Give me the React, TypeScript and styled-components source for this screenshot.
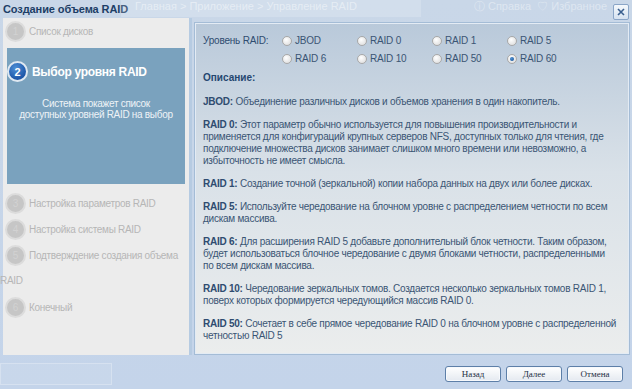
import React from 'react';
import styled, { createGlobalStyle } from 'styled-components';

const GlobalStyle = createGlobalStyle`
  html, body { margin: 0; padding: 0; }
  body { width: 632px; height: 389px; overflow: hidden; background: #c6d6ea; }
`;

const Window = styled.div`
  width: 632px;
  height: 389px;
  display: flex;
  flex-direction: column;
  background: linear-gradient(#c9d7e8, #c4d4ea);
  font-family: 'Liberation Sans', Arial, sans-serif;
  position: relative;
  overflow: hidden;
`;

const TitleBar = styled.div`
  height: 18px;
  display: flex;
  align-items: center;
  padding-left: 3px;
  flex-shrink: 0;
`;

const Title = styled.div`
  font-size: 11px;
  font-weight: bold;
  color: #1d3e66;
  letter-spacing: -0.1px;
  white-space: nowrap;
  width: 118px;
  flex-shrink: 0;
`;

const GhostTab = styled.div`
  height: 18px;
  width: 300px;
  margin-top: -3px;
  background: rgba(255, 255, 255, 0.18);
  color: rgba(255, 255, 255, 0.45);
  font-size: 11px;
  line-height: 14px;
  padding-left: 14px;
  box-sizing: border-box;
  white-space: nowrap;
  overflow: hidden;
`;

const GhostLinks = styled.div`
  margin-left: auto;
  color: rgba(255, 255, 255, 0.4);
  font-size: 11px;
  margin-top: -6px;
  margin-right: 6px;
  white-space: nowrap;
`;

const Close = styled.div`
  width: 14px;
  height: 14px;
  margin-right: 3px;
  margin-top: 5px;
  border: 1px solid #8aa5c7;
  border-radius: 2px;
  background: linear-gradient(#f4f8fc, #d6e2f0);
  display: flex;
  align-items: center;
  justify-content: center;
`;

const Body = styled.div`
  display: flex;
  height: 337px;
  padding-left: 3px;
  flex-shrink: 0;
`;

const Steps = styled.div`
  width: 186px;
  background: #ececec;
  border-right: 3px solid #b6cbe2;
`;

const StepRow = styled.div`
  display: flex;
  align-items: center;
  height: 26px;
  color: #b6b6b6;
  font-size: 10px;
  letter-spacing: -0.3px;
  white-space: nowrap;
  padding-left: 2px;
`;

const Wrapped = styled.div`
  color: #b6b6b6;
  font-size: 10px;
  letter-spacing: -0.3px;
  height: 26px;
  line-height: 26px;
  margin-left: -3px;
`;

const Num = styled.div<{ $active?: boolean }>`
  width: 17px;
  height: 17px;
  border-radius: 50%;
  flex-shrink: 0;
  display: flex;
  align-items: center;
  justify-content: center;
  margin-right: ${(p) => (p.$active ? '4px' : '3px')};
  font-size: ${(p) => (p.$active ? '11px' : '10px')};
  letter-spacing: 0;
  color: ${(p) => (p.$active ? '#fff' : '#d2d2d2')};
  background: ${(p) =>
    p.$active
      ? 'radial-gradient(circle at 40% 30%, #4e8fd6, #1d56a8 70%)'
      : '#c6c6c6'};
  border: 2px solid ${(p) => (p.$active ? '#dfe8f1' : '#dcdcdc')};
  font-weight: ${(p) => (p.$active ? 'bold' : 'normal')};
`;

const ActiveStep = styled.div`
  margin: 4px 4px 6px 4px;
  height: 136px;
  background: #7aa2be;
  color: #fff;
  padding-top: 13px;
  box-sizing: border-box;
`;

const ActiveHead = styled.div`
  display: flex;
  align-items: center;
  font-size: 12px;
  font-weight: bold;
  letter-spacing: -0.3px;
  white-space: nowrap;
`;

const ActiveDesc = styled.div`
  text-align: center;
  font-size: 10px;
  line-height: 11px;
  letter-spacing: -0.3px;
  margin-top: 16px;
  color: #eef3f7;
`;

const Panel = styled.div`
  flex: 1;
  margin: 4px 2px 0 2px;
  border: 1px solid #a4bcd6;
  box-shadow: inset 0 0 0 1px #e3ebf4;
  background: linear-gradient(#b9c9da 0%, #d9e1e8 45%, #ebeded 100%);
  padding: 12px 8px 0 8px;
  color: #2f4c70;
  font-size: 10px;
`;

const LevelGrid = styled.div`
  display: grid;
  grid-template-columns: 79px 75px 75px 75px 75px;
  row-gap: 7px;
  align-items: center;
  letter-spacing: -0.2px;
`;

const Label = styled.div`
  color: #2f4c70;
`;

const Option = styled.label`
  display: flex;
  align-items: center;
  gap: 3px;
  color: #3a5574;
  height: 11px;
`;

const Radio = styled.span<{ $checked?: boolean }>`
  width: 8px;
  height: 8px;
  border-radius: 50%;
  border: 1px solid #a8a8a8;
  background: radial-gradient(circle at 40% 35%, #ffffff, #d8d8d8);
  display: inline-flex;
  align-items: center;
  justify-content: center;
  &::after {
    content: '';
    display: ${(p) => (p.$checked ? 'block' : 'none')};
    width: 4px;
    height: 4px;
    border-radius: 50%;
    background: radial-gradient(circle at 40% 35%, #4d8fd2, #104c92);
  }
`;

const Heading = styled.div`
  font-weight: bold;
  color: #254770;
  margin-top: 8px;
  margin-bottom: 13px;
`;

const Para = styled.p`
  margin: 0 0 11px 0;
  line-height: 12px;
  letter-spacing: -0.25px;
  color: #3a5574;
  width: 414px;
`;

const Term = styled.b`
  color: #2f4c70;
`;

const Footer = styled.div`
  flex: 1;
  display: flex;
  justify-content: flex-end;
  align-items: center;
  gap: 5px;
  padding-right: 9px;
  position: relative;
`;

const GhostBox = styled.div`
  position: absolute;
  left: 0;
  top: 8px;
  width: 110px;
  height: 20px;
  border: 1px solid rgba(255, 255, 255, 0.25);
  background: rgba(255, 255, 255, 0.08);
`;

const Button = styled.button`
  width: 56px;
  height: 16px;
  padding: 0;
  border: 1px solid #5d7fa8;
  border-radius: 3px;
  background: linear-gradient(#ffffff, #e4e9f0);
  font-family: 'Liberation Serif', 'Times New Roman', serif;
  font-size: 9px;
  color: #1e2e44;
  box-shadow: inset 0 0 0 1px #f7f9fc;
  margin-top: 3px;
`;

const steps = [
  'Список дисков',
  'Выбор уровня RAID',
  'Настройка параметров RAID',
  'Настройка системы RAID',
  'Подтверждение создания объема',
  'Конечный',
];

const levels = [
  ['JBOD', 'RAID 0', 'RAID 1', 'RAID 5'],
  ['RAID 6', 'RAID 10', 'RAID 50', 'RAID 60'],
];

const descriptions: [string, string][] = [
  ['JBOD:', 'Объединение различных дисков и объемов хранения в один накопитель.'],
  [
    'RAID 0:',
    'Этот параметр обычно используется для повышения производительности и применяется для конфигураций крупных серверов NFS, доступных только для чтения, где подключение множества дисков занимает слишком много времени или невозможно, а избыточность не имеет смысла.',
  ],
  ['RAID 1:', 'Создание точной (зеркальной) копии набора данных на двух или более дисках.'],
  ['RAID 5:', 'Используйте чередование на блочном уровне с распределением четности по всем дискам массива.'],
  [
    'RAID 6:',
    'Для расширения RAID 5 добавьте дополнительный блок четности. Таким образом, будет использоваться блочное чередование с двумя блоками четности, распределенными по всем дискам массива.',
  ],
  [
    'RAID 10:',
    'Чередование зеркальных томов. Создается несколько зеркальных томов RAID 1, поверх которых формируется чередующийся массив RAID 0.',
  ],
  ['RAID 50:', 'Сочетает в себе прямое чередование RAID 0 на блочном уровне с распределенной четностью RAID 5'],
];

const App: React.FC = () => {
  const selected = 'RAID 60';

  return (
    <>
      <GlobalStyle />
      <Window>
        <TitleBar>
          <Title>Создание объема RAID</Title>
          <GhostTab>Главная &gt; Приложение &gt; Управление RAID</GhostTab>
          <GhostLinks>ⓘ Справка &nbsp;♡ Избранное</GhostLinks>
          <Close>
            <svg width="10" height="10" viewBox="0 0 10 10">
              <path d="M2 2 L8 8 M8 2 L2 8" stroke="#3a5f8f" strokeWidth="1.6" />
            </svg>
          </Close>
        </TitleBar>
        <Body>
          <Steps>
            <StepRow>
              <Num>1</Num>
              {steps[0]}
            </StepRow>
            <ActiveStep>
              <ActiveHead>
                <Num $active>2</Num>
                {steps[1]}
              </ActiveHead>
              <ActiveDesc>
                Система покажет список
                <br />
                доступных уровней RAID на выбор
              </ActiveDesc>
            </ActiveStep>
            <StepRow>
              <Num>3</Num>
              {steps[2]}
            </StepRow>
            <StepRow>
              <Num>4</Num>
              {steps[3]}
            </StepRow>
            <StepRow>
              <Num>5</Num>
              {steps[4]}
            </StepRow>
            <Wrapped>RAID</Wrapped>
            <StepRow>
              <Num>6</Num>
              {steps[5]}
            </StepRow>
          </Steps>
          <Panel>
            <LevelGrid>
              <Label>Уровень RAID:</Label>
              {levels[0].map((l) => (
                <Option key={l}>
                  <Radio $checked={l === selected} />
                  {l}
                </Option>
              ))}
              <span />
              {levels[1].map((l) => (
                <Option key={l}>
                  <Radio $checked={l === selected} />
                  {l}
                </Option>
              ))}
            </LevelGrid>
            <Heading>Описание:</Heading>
            {descriptions.map(([term, text]) => (
              <Para key={term}>
                <Term>{term}</Term> {text}
              </Para>
            ))}
          </Panel>
        </Body>
        <Footer>
          <GhostBox />
          <Button>Назад</Button>
          <Button>Далее</Button>
          <Button>Отмена</Button>
        </Footer>
      </Window>
    </>
  );
};

export default App;
